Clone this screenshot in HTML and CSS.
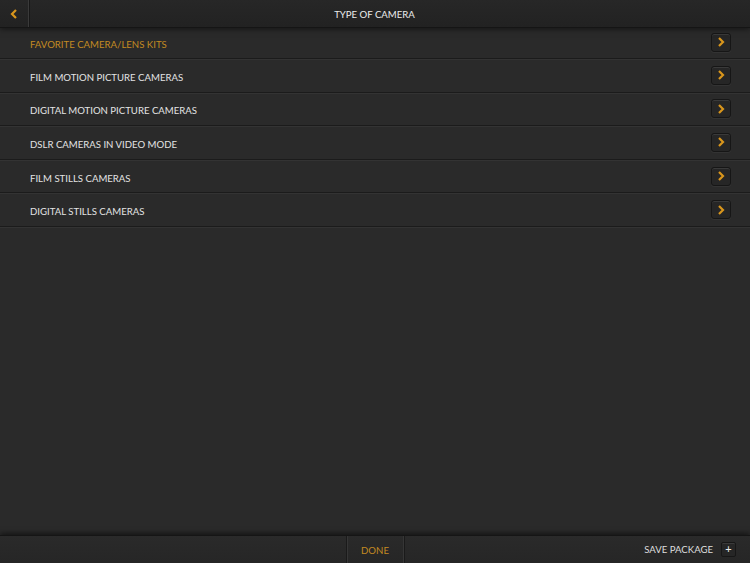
FILE: index.html
```html
<!DOCTYPE html>
<html lang="en">
<head>
   <meta charset="UTF-8">
   <meta name="viewport" content="width=device-width, initial-scale=1.0">
   <title>Type of Camera</title>
   <link rel="stylesheet" href="styles.css">
</head>
<body>
   <header class="topbar">
       <button class="back" type="button">
           <svg width="8" height="10" viewBox="0 0 8 10"><path d="M6 1 L2 5 L6 9" fill="none" stroke="#d9961c" stroke-width="2.2"/></svg>
       </button>
       <h1 class="title">TYPE OF CAMERA</h1>
       <div class="spacer"></div>
   </header>

   <ul class="list">
       <li class="row active"><span>FAVORITE CAMERA/LENS KITS</span><i class="go"><svg width="8" height="10" viewBox="0 0 8 10"><path d="M2 1 L6 5 L2 9" fill="none" stroke="#d9961c" stroke-width="2.2"/></svg></i></li>
       <li class="row"><span>FILM MOTION PICTURE CAMERAS</span><i class="go"><svg width="8" height="10" viewBox="0 0 8 10"><path d="M2 1 L6 5 L2 9" fill="none" stroke="#d9961c" stroke-width="2.2"/></svg></i></li>
       <li class="row"><span>DIGITAL MOTION PICTURE CAMERAS</span><i class="go"><svg width="8" height="10" viewBox="0 0 8 10"><path d="M2 1 L6 5 L2 9" fill="none" stroke="#d9961c" stroke-width="2.2"/></svg></i></li>
       <li class="row"><span>DSLR CAMERAS IN VIDEO MODE</span><i class="go"><svg width="8" height="10" viewBox="0 0 8 10"><path d="M2 1 L6 5 L2 9" fill="none" stroke="#d9961c" stroke-width="2.2"/></svg></i></li>
       <li class="row"><span>FILM STILLS CAMERAS</span><i class="go"><svg width="8" height="10" viewBox="0 0 8 10"><path d="M2 1 L6 5 L2 9" fill="none" stroke="#d9961c" stroke-width="2.2"/></svg></i></li>
       <li class="row"><span>DIGITAL STILLS CAMERAS</span><i class="go"><svg width="8" height="10" viewBox="0 0 8 10"><path d="M2 1 L6 5 L2 9" fill="none" stroke="#d9961c" stroke-width="2.2"/></svg></i></li>
   </ul>

   <footer class="bottombar">
       <div class="side"></div>
       <button class="done" type="button">DONE</button>
       <div class="side right">
           <span>SAVE PACKAGE</span>
           <i class="plus">+</i>
       </div>
   </footer>
</body>
</html>
```

FILE: styles.css
```css
html, body {
    height: 100%;
}

body {
    margin: 0;
    font-family: 'Lato', 'Open Sans', sans-serif;
    background: #2a2a2a;
    color: #e2e2e2;
    display: flex;
    flex-direction: column;
    overflow: hidden;
}

.topbar {
    height: 27px;
    flex: none;
    display: flex;
    align-items: center;
    background: linear-gradient(#272727, #222);
    box-shadow: 0 1px 0 #151515, 0 2px 6px rgba(0, 0, 0, 0.55);
    position: relative;
    z-index: 1;
}

.back {
    width: 29px;
    height: 27px;
    background: none;
    border: none;
    border-right: 1px solid #3a3a3a;
    box-shadow: 1px 0 0 #181818;
    padding: 0;
    display: flex;
    align-items: center;
    justify-content: center;
}

.title {
    flex: 1;
    margin: 0;
    padding-top: 1px;
    text-align: center;
    font-size: 9.6px;
    font-weight: 400;
    color: #ececec;
}

.spacer {
    width: 30px;
}

.list {
    list-style: none;
    margin: 0;
    padding: 0;
}

.row {
    height: 33.6px;
    box-sizing: border-box;
    display: flex;
    align-items: center;
    justify-content: space-between;
    padding: 4px 19px 0 30px;
    border-bottom: 1px solid #1b1b1b;
    box-shadow: 0 1px 0 #333;
    font-size: 9.6px;
    color: #e4e4e4;
}

.row:first-child {
    height: 32px;
    padding-top: 3px;
}

.row .go {
    margin-top: -4px;
}

.row.active {
    color: #c48a22;
}

.go {
    width: 18px;
    height: 17px;
    border: 1px solid #161616;
    border-radius: 3px;
    background: #262626;
    box-shadow: inset 0 1px 0 #3a3a3a, 0 1px 0 #333;
    display: flex;
    align-items: center;
    justify-content: center;
}

.bottombar {
    margin-top: auto;
    height: 27px;
    flex: none;
    display: grid;
    grid-template-columns: 1fr 59px 1fr;
    background: linear-gradient(#2a2a2a, #262626);
    border-top: 1px solid #151515;
    box-shadow: 0 -2px 5px rgba(0, 0, 0, 0.5);
    font-size: 9.6px;
}

.side {
    display: flex;
    align-items: center;
}

.side.right {
    justify-content: flex-end;
    padding-right: 14px;
    gap: 8px;
    color: #dedede;
}

.done {
    background: none;
    border: none;
    border-left: 1px solid #1a1a1a;
    border-right: 1px solid #1a1a1a;
    box-shadow: inset 1px 0 0 #363636, inset -1px 0 0 #363636;
    color: #c48a22;
    font-family: inherit;
    font-size: 9.6px;
    padding: 1px 0 0;
}

.plus {
    width: 13px;
    height: 13px;
    border: 1px solid #171717;
    border-radius: 2px;
    background: #262626;
    box-shadow: inset 0 1px 0 #3a3a3a;
    font-style: normal;
    font-size: 11px;
    line-height: 12px;
    text-align: center;
    color: #eee;
}
```
